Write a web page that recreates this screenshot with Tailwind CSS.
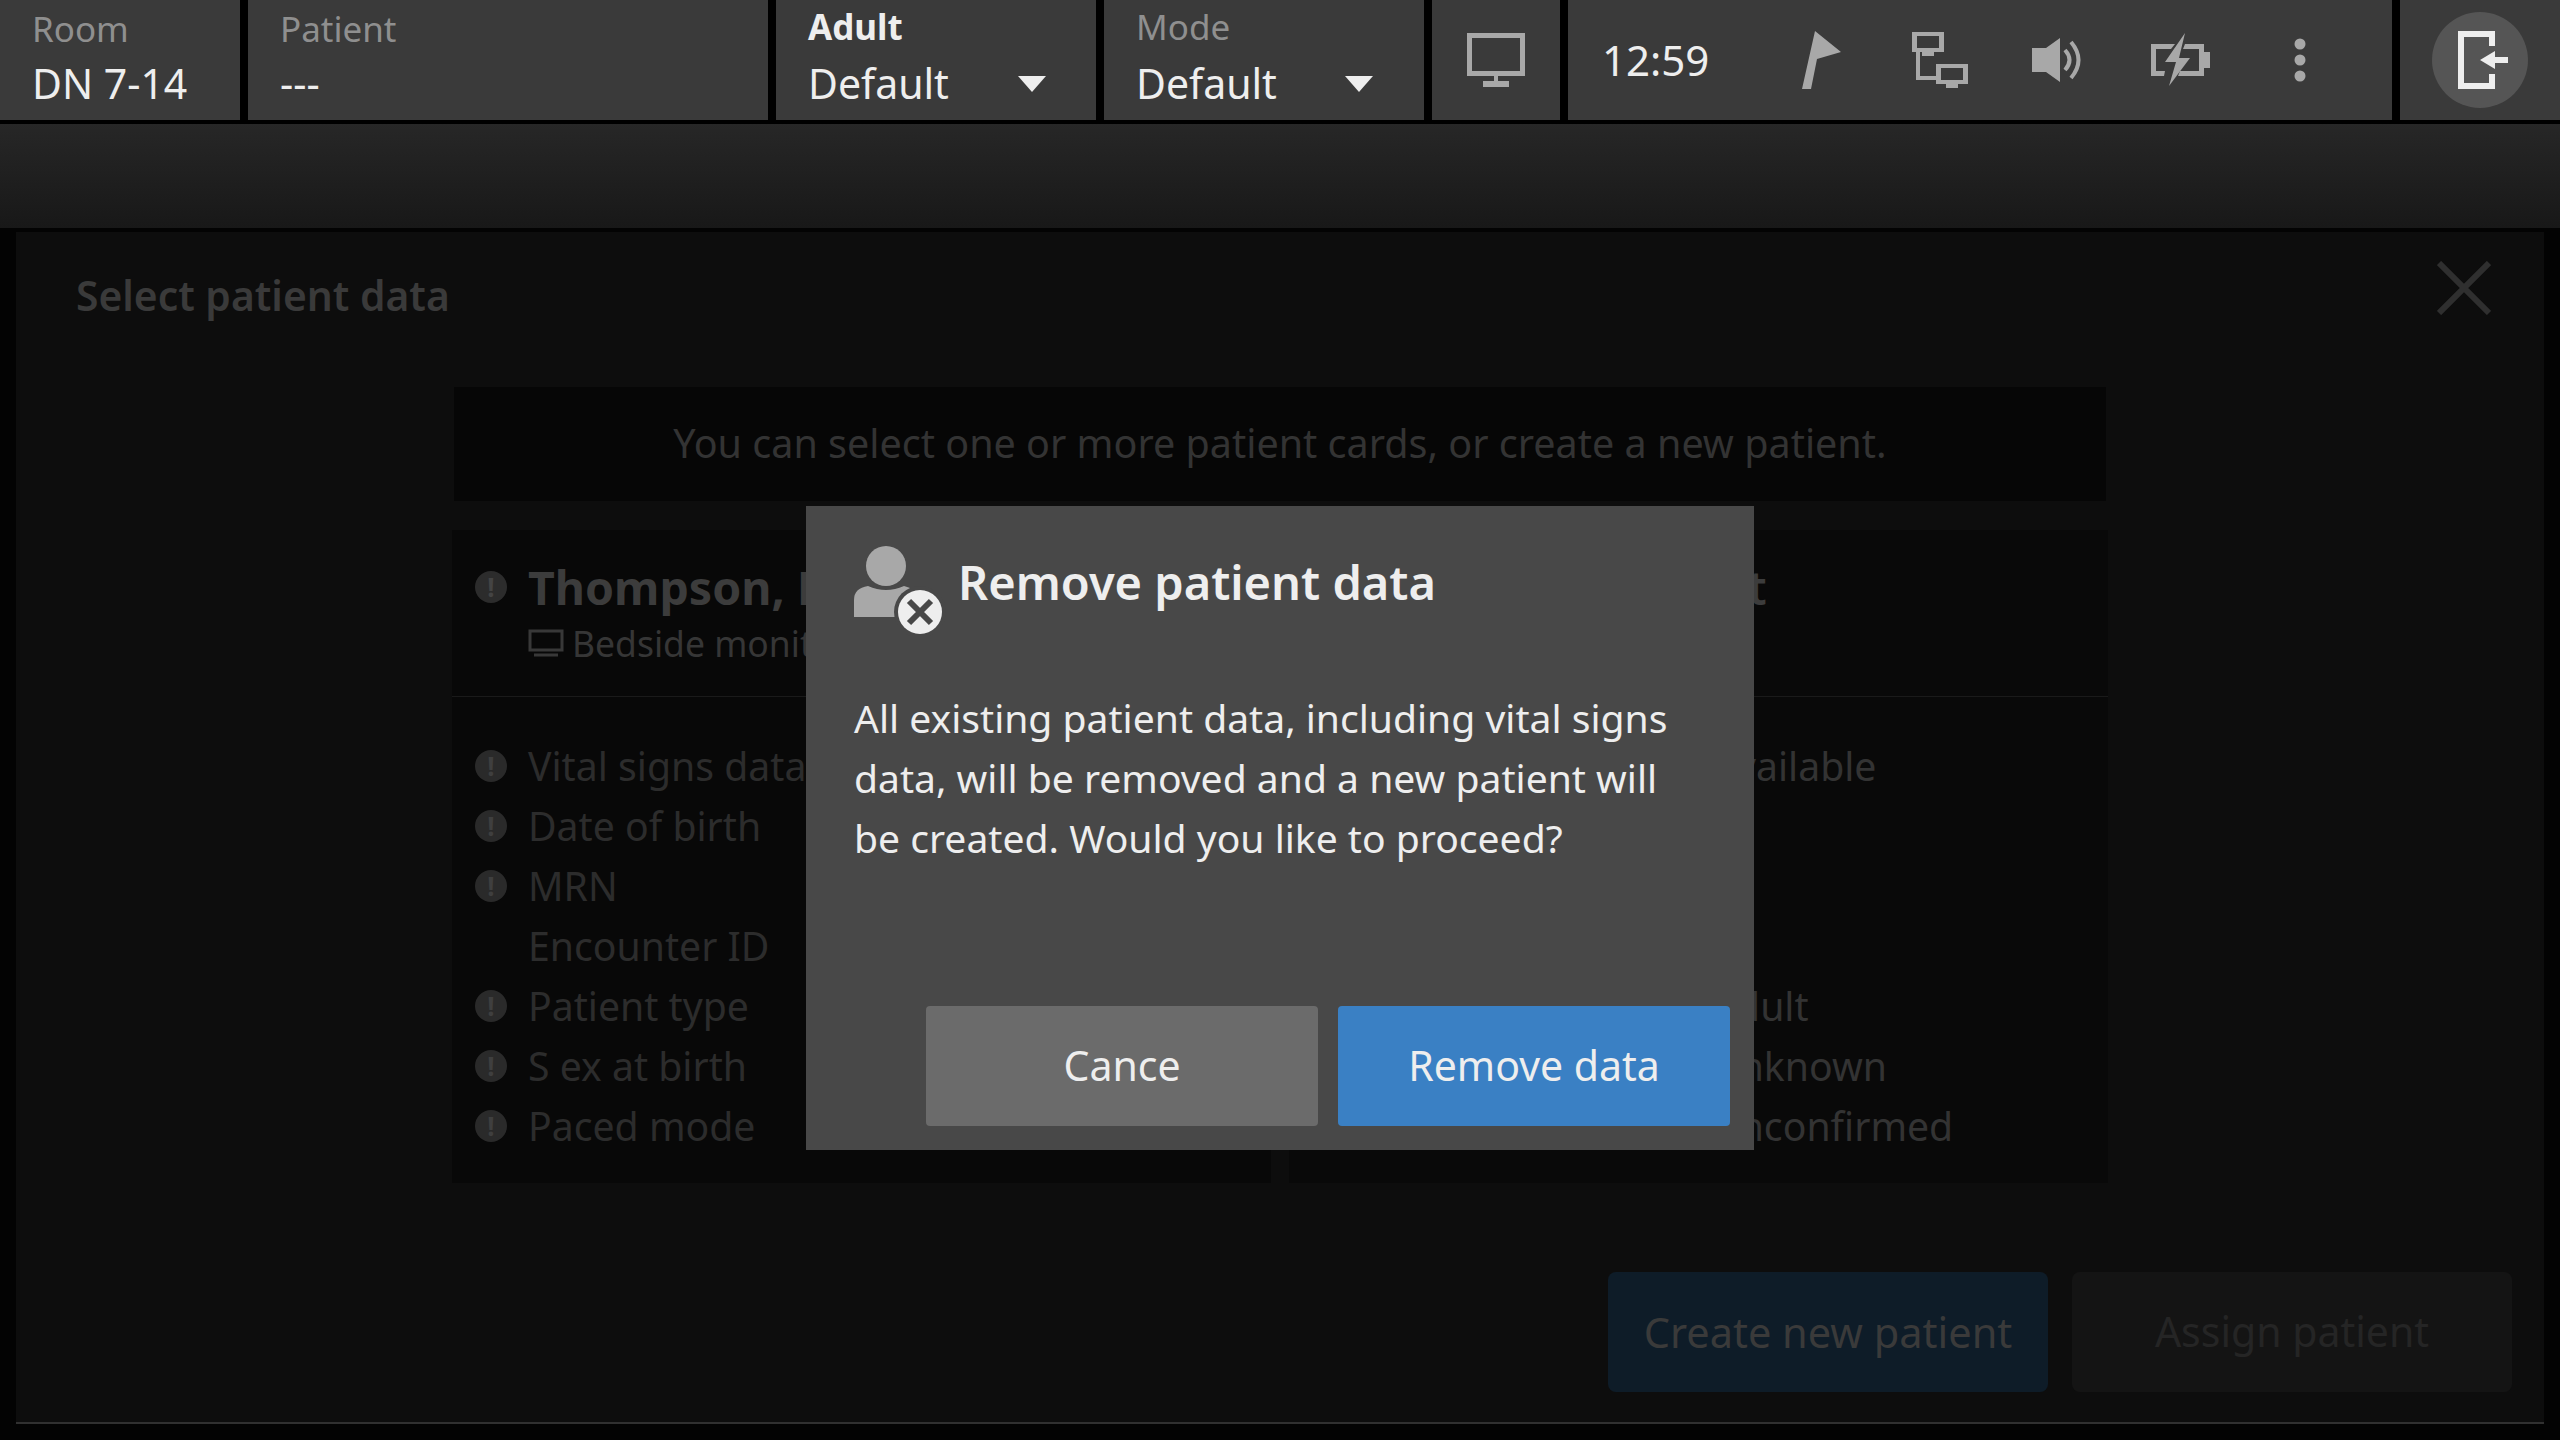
<!DOCTYPE html>
<html lang="en">
  <head>
    <meta charset="UTF-8" />
    <title>Remove patient data</title>
    <script src="https://cdn.jsdelivr.net/npm/@tailwindcss/browser@4"></script>
  </head>
  <body class="relative w-[2560px] h-[1440px] overflow-hidden bg-[#030303] font-['Noto_Sans','Open_Sans',sans-serif] text-[#eeeeee]">
    <!-- Top bar -->
    <header class="flex h-[124px] gap-2 pb-1 bg-black">
      <div class="w-[240px] bg-[#3a3a3a] pl-8 pt-[5px]">
        <p class="text-[35px] leading-[48px] text-[#8f8f8f]">Room</p>
        <p class="text-[41px] leading-[60px]">DN 7-14</p>
      </div>
      <div class="w-[520px] bg-[#3a3a3a] pl-8 pt-[5px]">
        <p class="text-[35px] leading-[48px] text-[#8f8f8f]">Patient</p>
        <p class="text-[41px] leading-[60px]">---</p>
      </div>
      <div class="relative w-[320px] bg-[#3a3a3a] pl-8 pt-[3px]">
        <p class="text-[35px] leading-[48px] font-bold">Adult</p>
        <p class="mt-[2px] text-[41px] leading-[60px]">Default</p>
        <svg class="absolute left-[242px] top-[76px]" width="28" height="16" viewBox="0 0 28 16"><path d="M0 0H28L14 16Z" fill="#eeeeee" /></svg>
      </div>
      <div class="relative w-[320px] bg-[#3a3a3a] pl-8 pt-[3px]">
        <p class="text-[35px] leading-[48px] text-[#8f8f8f]">Mode</p>
        <p class="mt-[2px] text-[41px] leading-[60px]">Default</p>
        <svg class="absolute left-[241px] top-[76px]" width="28" height="16" viewBox="0 0 28 16"><path d="M0 0H28L14 16Z" fill="#eeeeee" /></svg>
      </div>
      <div class="flex w-[128px] items-center justify-center bg-[#3a3a3a]">
        <svg width="60" height="56" viewBox="0 0 60 56" fill="#a8a8a8">
          <path fill-rule="evenodd" d="M1 1H59V44H1ZM6 6V39H54V6Z" />
          <path d="M28 44H32V50H28ZM17 49H43V55H17Z" />
        </svg>
      </div>
      <div class="relative flex w-[824px] items-center bg-[#3a3a3a] pl-[34px]">
        <span class="text-[42px] leading-[60px]">12:59</span>
        <svg class="absolute left-[232px] top-[28px]" width="44" height="64" viewBox="0 0 44 64" fill="#a8a8a8"><path d="M15 3L41 24L17 31L11 61H2Z" /></svg>
        <svg class="absolute left-[342px] top-[30px]" width="60" height="60" viewBox="0 0 60 60" fill="#a8a8a8">
          <path fill-rule="evenodd" d="M2 2H34V22H2ZM7 6V18H29V6Z" />
          <path d="M12 22H24V26H12Z" />
          <path d="M6 22H10V46H26V50H6Z" />
          <path fill-rule="evenodd" d="M26 34H58V54H26ZM31 38V50H53V38Z" />
          <path d="M36 54H48V58H36Z" />
        </svg>
        <svg class="absolute left-[464px] top-[36px]" width="50" height="48" viewBox="0 0 50 48" fill="#a8a8a8">
          <path d="M0 12H14L28 2V46L14 36H0Z" />
          <path d="M33 14Q42 24 33 34" fill="none" stroke="#a8a8a8" stroke-width="4" />
          <path d="M39 6Q54 24 39 42" fill="none" stroke="#a8a8a8" stroke-width="4" />
        </svg>
        <svg class="absolute left-[583px] top-[28px]" width="60" height="60" viewBox="0 0 60 60" fill="#a8a8a8">
          <path d="M0 16H24L20 21H5V43H14L13 48H0ZM34 16H53V24H59V40H53V48H27L29 43H48V21H32Z" />
          <path d="M34 5L14 34H25L18 58L39 30H28Z" />
        </svg>
        <svg class="absolute left-[726px] top-[36px]" width="12" height="48" viewBox="0 0 12 48" fill="#a8a8a8">
          <circle cx="6" cy="8" r="5.5" /><circle cx="6" cy="24" r="5.5" /><circle cx="6" cy="40" r="5.5" />
        </svg>
      </div>
      <div class="flex flex-1 items-center justify-center bg-[#3a3a3a]">
        <div class="flex h-24 w-24 items-center justify-center rounded-full bg-[#555555]">
          <svg width="52" height="60" viewBox="0 0 52 60" fill="#eeeeee" class="ml-[6px]">
            <path d="M1 1H38V16H32V7H7V53H32V44H38V59H1Z" />
            <path d="M23 30L38 21V27H51V33H38V39Z" />
          </svg>
        </div>
      </div>
    </header>

    <!-- Dimmed band under the bar -->
    <div class="h-[104px] bg-gradient-to-b from-[#272727] to-[#181818]"></div>

    <!-- Dimmed panel -->
    <main class="ml-4 mr-4 mt-1 flex h-[1192px] flex-col border-b-2 border-[#303030] bg-[#0d0d0d]">
      <div class="flex h-[155px] items-start justify-between pl-[60px] pr-[53px]">
        <h1 class="mt-[35px] text-[40.8px] leading-[56px] font-semibold text-[#3a3a3a]">Select patient data</h1>
        <svg class="mt-[29px]" width="54" height="54" viewBox="0 0 54 54"><path d="M2 2L52 52M52 2L2 52" stroke="#2f2f2f" stroke-width="6" /></svg>
      </div>

      <div class="mx-[438px] flex h-[114px] items-center justify-center bg-[#060606] text-[39.5px] text-[#333333]">
        You can select one or more patient cards, or create a new patient.
      </div>

      <div class="mx-[436px] mt-[29px] grid h-[653px] grid-cols-2 gap-[18px]">
        <section class="bg-[#080808]">
          <div class="h-[167px] border-b border-[#1a1a1a] pl-[23px] pt-[25px]">
            <div class="flex items-center gap-[21px]">
              <span class="flex h-8 w-8 items-center justify-center rounded-full bg-[#2c2c2c] text-[26px] leading-none font-bold text-[#444444]">!</span>
              <span class="text-[46.5px] leading-[64px] font-bold text-[#3c3c3c]">Thompson, M</span>
            </div>
            <div class="ml-[53px] flex items-center gap-[8px] text-[35.5px] leading-[48px] text-[#363636]">
              <svg width="36" height="28" viewBox="0 0 36 28" fill="none" stroke="#383838" stroke-width="3"><rect x="2" y="2" width="32" height="19" /><path d="M6 26H30" /></svg>
              Bedside monitor
            </div>
          </div>
          <ul class="pl-[23px] pt-[39px] text-[39.2px] leading-[60px] text-[#2c2c2c]">
            <li class="flex h-[60px] items-center gap-[21px]"><span class="flex h-8 w-8 items-center justify-center rounded-full bg-[#2a2a2a] text-[26px] leading-none font-bold text-[#3f3f3f]">!</span>Vital signs data</li>
            <li class="flex h-[60px] items-center gap-[21px]"><span class="flex h-8 w-8 items-center justify-center rounded-full bg-[#2a2a2a] text-[26px] leading-none font-bold text-[#3f3f3f]">!</span>Date of birth</li>
            <li class="flex h-[60px] items-center gap-[21px]"><span class="flex h-8 w-8 items-center justify-center rounded-full bg-[#2a2a2a] text-[26px] leading-none font-bold text-[#3f3f3f]">!</span>MRN</li>
            <li class="flex h-[60px] items-center pl-[53px]">Encounter ID</li>
            <li class="flex h-[60px] items-center gap-[21px]"><span class="flex h-8 w-8 items-center justify-center rounded-full bg-[#2a2a2a] text-[26px] leading-none font-bold text-[#3f3f3f]">!</span>Patient type</li>
            <li class="flex h-[60px] items-center gap-[21px]"><span class="flex h-8 w-8 items-center justify-center rounded-full bg-[#2a2a2a] text-[26px] leading-none font-bold text-[#3f3f3f]">!</span>S ex at birth</li>
            <li class="flex h-[60px] items-center gap-[21px]"><span class="flex h-8 w-8 items-center justify-center rounded-full bg-[#2a2a2a] text-[26px] leading-none font-bold text-[#3f3f3f]">!</span>Paced mode</li>
          </ul>
        </section>
        <section class="bg-[#090909]">
          <div class="h-[167px] border-b border-[#1a1a1a] pl-[84px] pt-[25px]">
            <span class="text-[46.5px] leading-[64px] font-semibold text-[#3c3c3c]">Unknown patient</span>
          </div>
          <ul class="pl-[422px] pt-[39px] text-[39.2px] leading-[60px] text-[#333333]">
            <li class="h-[60px]">Available</li>
            <li class="h-[60px]"></li>
            <li class="h-[60px]"></li>
            <li class="h-[60px]"></li>
            <li class="h-[60px]">Adult</li>
            <li class="h-[60px]">Unknown</li>
            <li class="h-[60px]">Unconfirmed</li>
          </ul>
        </section>
      </div>

      <div class="mt-auto flex justify-end gap-6 pr-8 pb-[30px]">
        <button class="h-[120px] w-[440px] rounded-lg bg-[#0e1c28] text-[41.5px] text-[#3a3a3a]">Create new patient</button>
        <button class="h-[120px] w-[440px] rounded-lg bg-[#141414] text-[41px] text-[#252525]">Assign patient</button>
      </div>
    </main>

    <!-- Dialog over the dimmed page -->
    <div class="absolute left-[806px] top-[506px] flex h-[644px] w-[948px] flex-col bg-[#484848] pl-[48px] pr-6 pb-6">
      <div class="flex items-start gap-[12px] pt-[38px]">
        <svg class="shrink-0" width="92" height="92" viewBox="0 0 92 92">
          <circle cx="32" cy="22" r="20" fill="#a8a8a8" />
          <path d="M0 73V56Q0 44 14 42Q32 50 50 42Q62 44 64 56V73Z" fill="#a8a8a8" />
          <circle cx="66" cy="68" r="26" fill="#484848" />
          <circle cx="66" cy="68" r="22" fill="#eeeeee" />
          <path d="M55 57L77 79M77 57L55 79" stroke="#484848" stroke-width="6" />
        </svg>
        <h2 class="mt-[8px] text-[47px] leading-[60px] font-semibold whitespace-nowrap">Remove patient data</h2>
      </div>
      <p class="mt-[52px] text-[39.1px] leading-[60px]">
        All existing patient data, including vital signs<br />
        data, will be removed and a new patient will<br />
        be created. Would you like to proceed?
      </p>
      <div class="mt-auto flex justify-end gap-5">
        <button class="h-[120px] w-[392px] rounded-[4px] bg-[#6b6b6b] text-[41px]">Cance</button>
        <button class="h-[120px] w-[392px] rounded-[4px] bg-[#3a80c4] text-[41px]">Remove data</button>
      </div>
    </div>
  </body>
</html>
